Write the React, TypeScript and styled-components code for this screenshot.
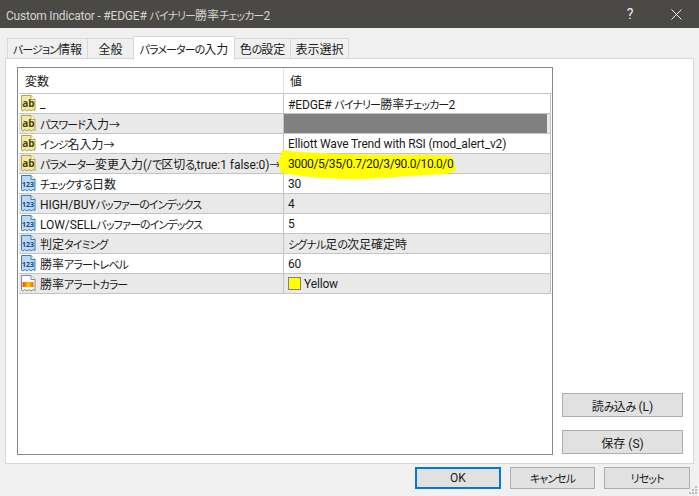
import React from "react";
import styled, { createGlobalStyle } from "styled-components";

const Global = createGlobalStyle`
  html, body { margin: 0; padding: 0; background: #f0f0f0; }
  * { box-sizing: border-box; }
  body {
    font-family: "Roboto", "Noto Sans CJK JP", sans-serif;
    font-size: 12px;
    font-feature-settings: "palt";
    color: #1a1a1a;
  }
`;

const Dialog = styled.div`
  width: 699px;
  height: 496px;
  position: relative;
  display: flex;
  flex-direction: column;
  overflow: hidden;
  background: #f0f0f0;
`;

const Kana = styled.span`
  font-size: 11px;
  letter-spacing: -0.9px;
`;

const Kanji = styled.span`
  letter-spacing: 0;
`;

const TitleBar = styled.div`
  height: 28px;
  flex: none;
  background: #4a4946;
  color: #d4d4d2;
  display: flex;
  align-items: center;
  padding-left: 6px;
  font-size: 12px;
`;

const TitleText = styled.span`
  flex: 1;
  letter-spacing: -0.2px;
`;

const TitleIcon = styled.span`
  width: 46px;
  display: flex;
  justify-content: center;
  color: #f2f2f2;
  font-size: 14px;
`;

const TabStrip = styled.div`
  height: 24px;
  flex: none;
  margin-top: 7px;
  padding-left: 7px;
  display: flex;
  align-items: flex-end;
  position: relative;
  z-index: 1;
`;

const Tab = styled.div<{ $w: number; $active?: boolean }>`
  width: ${(p) => p.$w}px;
  height: ${(p) => (p.$active ? 24 : 21)}px;
  margin-bottom: ${(p) => (p.$active ? -1 : 0)}px;
  background: ${(p) => (p.$active ? "#ffffff" : "#f0f0f0")};
  border: 1px solid #d9d9d9;
  border-bottom: ${(p) => (p.$active ? "none" : "1px solid #d9d9d9")};
  margin-right: -1px;
  display: flex;
  align-items: center;
  justify-content: center;
  white-space: nowrap;
  z-index: ${(p) => (p.$active ? 2 : 0)};
  position: relative;
`;

const Panel = styled.div`
  margin: -1px 5px 0 5px;
  height: 406px;
  flex: none;
  background: #ffffff;
  border: 1px solid #d9d9d9;
  padding: 8px 9px 8px 11px;
  display: flex;
  gap: 9px;
`;

const TableBox = styled.div`
  width: 536px;
  height: 388px;
  flex: none;
  border: 1px solid #828790;
  padding-left: 1px;
`;

const HeaderRow = styled.div`
  height: 25px;
  display: grid;
  grid-template-columns: 265px 267px;
`;

const HeaderCell = styled.div<{ $first?: boolean }>`
  padding-left: 6px;
  display: flex;
  align-items: center;
  border-right: ${(p) => (p.$first ? "1px solid #e5e5e5" : "none")};
`;

const Row = styled.div<{ $alt: boolean; $lift?: boolean }>`
  height: 20px;
  display: grid;
  grid-template-columns: 265px 266px;
  width: 532px;
  background: ${(p) => (p.$alt ? "#e9e9e9" : "#ffffff")};
  border-top: 1px solid #c4c4c4;
  border-right: 1px solid #c4c4c4;
  position: relative;
  z-index: ${(p) => (p.$lift ? 1 : 0)};
  &:last-child {
    height: 21px;
    border-bottom: 1px solid #c4c4c4;
  }
`;

const NameCell = styled.div`
  display: flex;
  align-items: center;
  gap: 4px;
  padding-left: 1px;
  border-right: 1px solid #c4c4c4;
  white-space: nowrap;
  letter-spacing: -0.05px;
`;

const ValueCell = styled.div`
  display: flex;
  align-items: center;
  padding-left: 4px;
  position: relative;
  white-space: nowrap;
`;

const ValueText = styled.span<{ $tight?: boolean }>`
  position: relative;
  letter-spacing: ${(p) => (p.$tight ? -0.4 : -0.15)}px;
`;

const Masked = styled.div`
  width: 263px;
  height: 19px;
  margin-left: -4px;
  background: #808080;
`;

const Swatch = styled.span`
  width: 13px;
  height: 13px;
  background: #ffff00;
  border: 1px solid #808080;
  margin-right: 3px;
`;

const Scribble = styled.svg`
  position: absolute;
  left: -6px;
  top: -6px;
  width: 190px;
  height: 34px;
  overflow: visible;
`;

const SideColumn = styled.div`
  flex: 1;
  display: flex;
  flex-direction: column;
  justify-content: flex-end;
  gap: 13px;
  padding-bottom: 1px;
`;

const SideButton = styled.div`
  width: 121px;
  height: 24px;
  background: #e1e1e1;
  border: 1px solid #adadad;
  display: flex;
  align-items: center;
  justify-content: center;
`;

const Footer = styled.div`
  display: flex;
  gap: 9px;
  padding: 3px 9px 0 415px;
`;

const FootButton = styled.div<{ $primary?: boolean }>`
  width: 86px;
  height: 22px;
  background: #e1e1e1;
  border: ${(p) => (p.$primary ? "2px solid #0078d7" : "1px solid #adadad")};
  display: flex;
  align-items: center;
  justify-content: center;
`;

const Grip = styled.svg`
  position: absolute;
  right: 1px;
  bottom: 1px;
  width: 10px;
  height: 10px;
`;

/* Kana in the reference font is much narrower than kanji: runs are split so each gets its own metrics. */
function T({ children }: { children: string }) {
  const parts = children.match(/[\u3040-\u30ff→]+|[\u4e00-\u9fff]+|[^\u3040-\u30ff→\u4e00-\u9fff]+/g) ?? [];
  return (
    <span>
      {parts.map((s, i) =>
        /^[\u3040-\u30ff→]/.test(s) ? (
          <Kana key={i}>{s}</Kana>
        ) : /^[\u4e00-\u9fff]/.test(s) ? (
          <Kanji key={i}>{s}</Kanji>
        ) : (
          <React.Fragment key={i}>{s}</React.Fragment>
        )
      )}
    </span>
  );
}

type Kind = "ab" | "num" | "color";

const torn = "M1.5 .5H11L15 4.5V15.5L13 14.5L11 16L9 14.5L7 16L5 14.5L3 16L1.5 15Z";

function ParamIcon({ kind }: { kind: Kind }) {
  if (kind === "ab") {
    return (
      <svg width="16" height="17" viewBox="0 0 16 17" style={{ flex: "none" }}>
        <path d={torn} fill="#f2e9a6" stroke="#b3a545" />
        <path d="M11 .5V4.5H15" fill="#fff" stroke="#b3a545" />
        <text x="2.2" y="11.5" fontSize="10" fontWeight="700" fill="#4c4410" fontFamily="Noto Sans">ab</text>
      </svg>
    );
  }
  if (kind === "num") {
    return (
      <svg width="16" height="17" viewBox="0 0 16 17" style={{ flex: "none" }}>
        <path d={torn} fill="#bcd8f2" stroke="#3b7cc0" />
        <path d="M11 .5V4.5H15" fill="#fff" stroke="#3b7cc0" />
        <text x="2" y="12" fontSize="7" fontWeight="700" fill="#124b85" fontFamily="Noto Sans">123</text>
      </svg>
    );
  }
  return (
    <svg width="16" height="17" viewBox="0 0 16 17" style={{ flex: "none" }}>
      <defs>
        <linearGradient id="flame" x1="0" x2="1" y1="0" y2="0">
          <stop offset="0" stopColor="#e8500a" />
          <stop offset=".55" stopColor="#ffc800" />
          <stop offset="1" stopColor="#ee6a10" />
        </linearGradient>
      </defs>
      <path d={torn} fill="#fdfdfd" stroke="#8a8a8a" />
      <path d="M11 .5V4.5H15" fill="#fff" stroke="#8a8a8a" />
      <rect x="2.5" y="7" width="11" height="5" fill="url(#flame)" />
    </svg>
  );
}

type Param = { kind: Kind; name: string; value?: string; special?: "mask" | "mark" | "swatch" };

const params: Param[] = [
  { kind: "ab", name: "_", value: "#EDGE# バイナリー勝率チェッカー2" },
  { kind: "ab", name: "パスワード入力→", special: "mask" },
  { kind: "ab", name: "インジ名入力→", value: "Elliott Wave Trend with RSI (mod_alert_v2)" },
  { kind: "ab", name: "パラメーター変更入力(/で区切る,true:1 false:0)→", value: "3000/5/35/0.7/20/3/90.0/10.0/0", special: "mark" },
  { kind: "num", name: "チェックする日数", value: "30" },
  { kind: "num", name: "HIGH/BUYバッファーのインデックス", value: "4" },
  { kind: "num", name: "LOW/SELLバッファーのインデックス", value: "5" },
  { kind: "num", name: "判定タイミング", value: "シグナル足の次足確定時" },
  { kind: "num", name: "勝率アラートレベル", value: "60" },
  { kind: "color", name: "勝率アラートカラー", value: "Yellow", special: "swatch" },
];

const tabs = [
  { label: "バージョン情報", w: 81 },
  { label: "全般", w: 47 },
  { label: "パラメーターの入力", w: 102, active: true },
  { label: "色の設定", w: 57 },
  { label: "表示選択", w: 59 },
];

export default function App() {
  return (
    <Dialog>
      <Global />
      <TitleBar>
        <TitleText><T>Custom Indicator - #EDGE# バイナリー勝率チェッカー2</T></TitleText>
        <TitleIcon>?</TitleIcon>
        <TitleIcon>
          <svg width="11" height="11" viewBox="0 0 11 11">
            <path d="M.5 .5L10.5 10.5M10.5 .5L.5 10.5" stroke="#f2f2f2" strokeWidth="1" />
          </svg>
        </TitleIcon>
      </TitleBar>
      <TabStrip>
        {tabs.map((t) => (
          <Tab key={t.label} $w={t.w} $active={t.active}><T>{t.label}</T></Tab>
        ))}
      </TabStrip>
      <Panel>
        <TableBox>
          <HeaderRow>
            <HeaderCell $first>変数</HeaderCell>
            <HeaderCell>値</HeaderCell>
          </HeaderRow>
          {params.map((p, i) => (
            <Row key={p.name} $alt={i % 2 === 1} $lift={p.special === "mark"}>
              <NameCell>
                <ParamIcon kind={p.kind} />
                <T>{p.name}</T>
              </NameCell>
              <ValueCell>
                {p.special === "mask" && <Masked />}
                {p.special === "swatch" && <Swatch />}
                {p.special === "mark" && (
                  <Scribble viewBox="0 0 190 34">
                    <path
                      d="M4 2C30 5 60 6 105 7C125 7 160 6 174 8L178 20C176 26 168 26 150 27C120 28 90 32 65 31C40 30 20 28 3 25L0 14Z"
                      fill="#ffff00"
                    />
                  </Scribble>
                )}
                {p.value && <ValueText $tight={p.special === "mark"}><T>{p.value}</T></ValueText>}
              </ValueCell>
            </Row>
          ))}
        </TableBox>
        <SideColumn>
          <SideButton><T>読み込み (L)</T></SideButton>
          <SideButton><T>保存 (S)</T></SideButton>
        </SideColumn>
      </Panel>
      <Footer>
        <FootButton $primary>OK</FootButton>
        <FootButton><T>キャンセル</T></FootButton>
        <FootButton><T>リセット</T></FootButton>
      </Footer>
      <Grip viewBox="0 0 10 10">
        <path d="M7 1h2v2H7zM4 4h2v2H4zM7 4h2v2H7zM1 7h2v2H1zM4 7h2v2H4zM7 7h2v2H7z" fill="#bdbdbd" />
      </Grip>
    </Dialog>
  );
}
